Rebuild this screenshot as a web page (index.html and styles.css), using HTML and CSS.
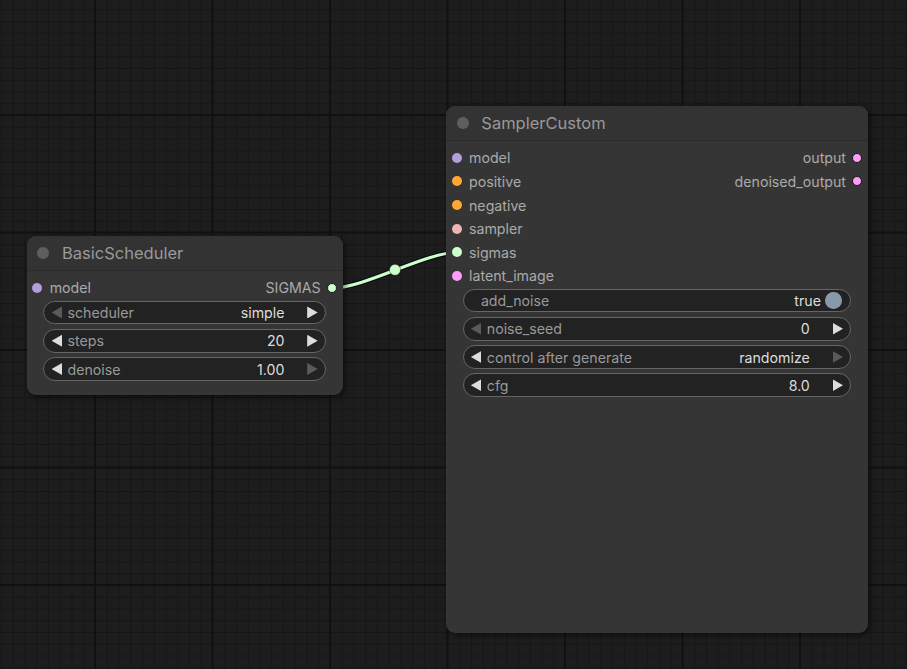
FILE: index.html
```html
<!DOCTYPE html>
<html>
<head>
<meta charset="utf-8">
<link rel="stylesheet" href="styles.css">
</head>
<body>
<div class="canvas">
  <svg class="links" width="907" height="669" viewBox="0 0 907 669">
    <path class="link-outline" d="M 333 288 C 364 288, 425.7 252.5, 456.7 252.5"/>
    <path class="link" d="M 333 288 C 364 288, 425.7 252.5, 456.7 252.5"/>
    <circle class="link-mid" cx="395" cy="269.8" r="5.5"/>
  </svg>

  <div class="node node-sched">
    <div class="node-title"><span class="title-dot"></span><span class="title-text">BasicScheduler</span></div>
    <div class="node-body">
      <div class="slot-row">
        <div class="slot-in"><span class="dot c-model"></span><span>model</span></div>
        <div class="slot-out"><span>SIGMAS</span><span class="dot out c-sigmas"></span></div>
      </div>
      <div class="widgets">
        <div class="widget">
          <span class="arrow left dim"></span><span class="w-label">scheduler</span>
          <span class="w-value">simple</span><span class="arrow right"></span>
        </div>
        <div class="widget">
          <span class="arrow left"></span><span class="w-label">steps</span>
          <span class="w-value">20</span><span class="arrow right"></span>
        </div>
        <div class="widget">
          <span class="arrow left"></span><span class="w-label">denoise</span>
          <span class="w-value">1.00</span><span class="arrow right dim"></span>
        </div>
      </div>
    </div>
  </div>

  <div class="node node-sampler">
    <div class="node-title"><span class="title-dot"></span><span class="title-text">SamplerCustom</span></div>
    <div class="node-body">
      <div class="slot-row">
        <div class="slot-in"><span class="dot c-model"></span><span>model</span></div>
        <div class="slot-out"><span>output</span><span class="dot out c-latent"></span></div>
      </div>
      <div class="slot-row">
        <div class="slot-in"><span class="dot c-cond"></span><span>positive</span></div>
        <div class="slot-out"><span>denoised_output</span><span class="dot out c-latent"></span></div>
      </div>
      <div class="slot-row">
        <div class="slot-in"><span class="dot c-cond"></span><span>negative</span></div>
      </div>
      <div class="slot-row">
        <div class="slot-in"><span class="dot c-sampler"></span><span>sampler</span></div>
      </div>
      <div class="slot-row">
        <div class="slot-in"><span class="dot c-sigmas"></span><span>sigmas</span></div>
      </div>
      <div class="slot-row">
        <div class="slot-in"><span class="dot c-latent"></span><span>latent_image</span></div>
      </div>
      <div class="widgets">
        <div class="widget toggle">
          <span class="w-label">add_noise</span>
          <span class="w-value">true</span><span class="knob"></span>
        </div>
        <div class="widget">
          <span class="arrow left dim"></span><span class="w-label">noise_seed</span>
          <span class="w-value">0</span><span class="arrow right"></span>
        </div>
        <div class="widget">
          <span class="arrow left"></span><span class="w-label">control after generate</span>
          <span class="w-value">randomize</span><span class="arrow right dim"></span>
        </div>
        <div class="widget">
          <span class="arrow left"></span><span class="w-label">cfg</span>
          <span class="w-value">8.0</span><span class="arrow right"></span>
        </div>
      </div>
    </div>
  </div>
</div>
</body>
</html>
```

FILE: styles.css
```css
html, body {
  margin: 0;
  padding: 0;
  background: #1d1d1d;
}

.canvas {
  position: relative;
  width: 907px;
  height: 669px;
  overflow: hidden;
  font-family: Inter, "Liberation Sans", Arial, sans-serif;
  background-color: #1d1d1d;
  background-image:
    linear-gradient(to right, #111111 0, #111111 2px, transparent 2px),
    linear-gradient(to bottom, #111111 0, #111111 2px, transparent 2px),
    linear-gradient(to right, #161616 0, #161616 1px, transparent 1px),
    linear-gradient(to bottom, #161616 0, #161616 1px, transparent 1px);
  background-size: 117.5px 117.5px, 117.5px 117.5px, 11.75px 11.75px, 11.75px 11.75px;
  background-position: 94px 0, 0 114px, 1px 0, 0 9.25px;
}

.links {
  position: absolute;
  left: 0;
  top: 0;
  z-index: 0;
}

.link-outline {
  fill: none;
  stroke: rgba(0, 0, 0, 0.55);
  stroke-width: 5.5;
}

.link {
  fill: none;
  stroke: #cdffcd;
  stroke-width: 3;
}

.link-mid {
  fill: #cdffcd;
  stroke: rgba(0, 0, 0, 0.4);
  stroke-width: 1;
}

.node {
  position: absolute;
  z-index: 1;
  background: #353535;
  border-radius: 9px;
  box-shadow: 2px 2px 6px rgba(0, 0, 0, 0.55);
  box-sizing: border-box;
}

.node-sched {
  left: 26.7px;
  top: 236px;
  width: 316px;
  height: 159px;
}

.node-sampler {
  left: 446px;
  top: 106px;
  width: 422px;
  height: 527px;
}

.node-title {
  height: 35.4px;
  box-sizing: border-box;
  display: flex;
  align-items: center;
  background: #333333;
  border-bottom: 1px solid #2b2b2b;
  border-radius: 9px 9px 0 0;
}

.title-dot {
  width: 12px;
  height: 12px;
  border-radius: 50%;
  background: #5e5e5e;
  margin-left: 10.5px;
}

.title-text {
  margin-left: 12.8px;
  font-size: 16.5px;
  color: #999999;
}

.node-body {
  padding-top: 4.7px;
}

.slot-row {
  height: 23.6px;
  display: flex;
  align-items: center;
  justify-content: space-between;
  font-size: 14.2px;
  color: #aaaaaa;
}

.slot-in {
  display: flex;
  align-items: center;
  gap: 7.3px;
  padding-left: 5.7px;
}

.slot-out {
  display: flex;
  align-items: center;
  gap: 6.3px;
  padding-right: 5.7px;
}

.dot {
  width: 10px;
  height: 10px;
  border-radius: 50%;
  box-sizing: border-box;
  display: inline-block;
}

.dot.out {
  border: 1px solid #1a1a1a;
}

.c-model { background: #b39ddb; }
.c-cond { background: #ffa931; }
.c-sampler { background: #ecb4b4; }
.c-sigmas { background: #cdffcd; }
.c-latent { background: #ff9cf9; }

.widgets {
  margin-top: 1px;
  padding: 0 17px 0 16.5px;
  display: flex;
  flex-direction: column;
  gap: 4.7px;
}

.widget {
  height: 23.6px;
  box-sizing: border-box;
  border: 1px solid #666666;
  border-radius: 12px;
  background: #222222;
  display: flex;
  align-items: center;
  font-size: 14.2px;
}

.w-label {
  color: #999999;
  margin-left: 5.4px;
  flex: 1;
  white-space: nowrap;
}

.w-value {
  color: #dddddd;
  margin-right: 22.7px;
  white-space: nowrap;
}

.arrow {
  width: 10.5px;
  height: 12px;
  background: #dddddd;
  flex: none;
}

.arrow.left {
  margin-left: 7.4px;
  clip-path: polygon(0 50%, 100% 0, 100% 100%);
}

.arrow.right {
  margin-right: 7px;
  clip-path: polygon(0 0, 100% 50%, 0 100%);
}

.arrow.dim {
  background: #5a5a5a;
}

.toggle .w-label {
  margin-left: 17.4px;
}

.toggle .w-value {
  margin-right: 4px;
}

.knob {
  width: 16.6px;
  height: 16.6px;
  border-radius: 50%;
  background: #8899aa;
  margin-right: 8.4px;
  flex: none;
}
```
